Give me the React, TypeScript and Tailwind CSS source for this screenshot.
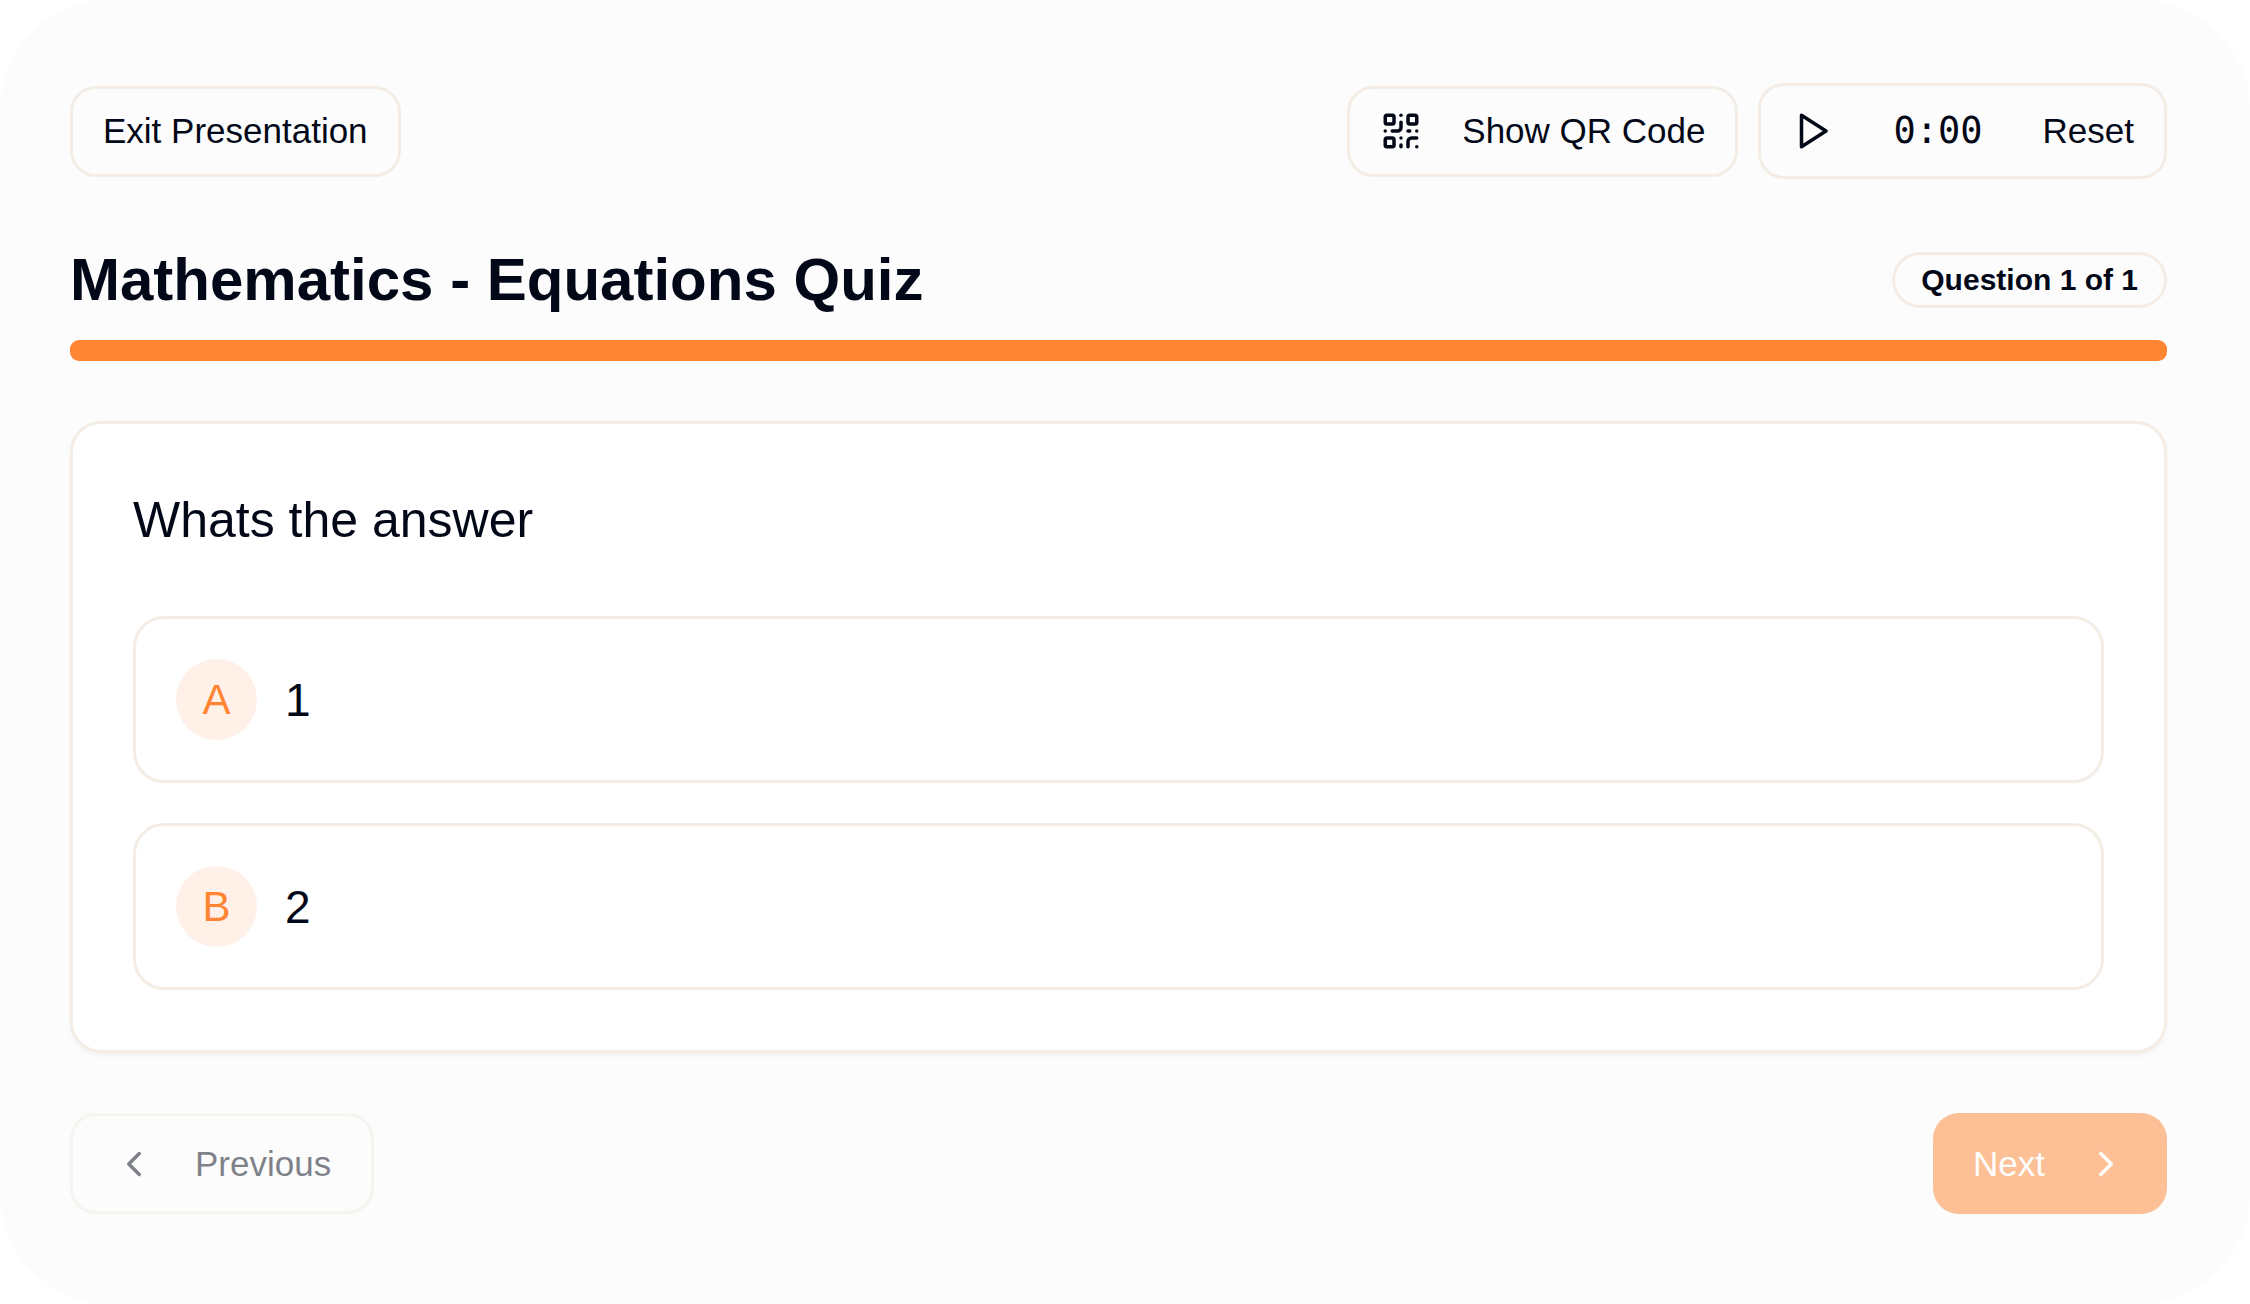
import { useEffect, useState } from "react";
import { ChevronLeft, ChevronRight, QrCode } from "lucide-react";

const quiz = {
  title: "Mathematics - Equations Quiz",
  questions: [{ text: "Whats the answer", options: ["1", "2"] }],
};

export default function App() {
  const [current, setCurrent] = useState(0);
  const [seconds, setSeconds] = useState(0);
  const [running, setRunning] = useState(false);

  // Count up while the timer is running
  useEffect(() => {
    if (!running) return;
    const timer = setInterval(() => setSeconds((s) => s + 1), 1000);
    return () => clearInterval(timer);
  }, [running]);

  const resetTimer = () => {
    setRunning(false);
    setSeconds(0);
  };

  const total = quiz.questions.length;
  const question = quiz.questions[current];
  const time = `${Math.floor(seconds / 60)}:${String(seconds % 60).padStart(2, "0")}`;

  return (
    <div className="min-h-screen bg-white font-['Liberation_Sans',Arial,sans-serif] text-[35px] leading-[52px] text-[#020817]">
      <main className="min-h-screen rounded-[110px] bg-[#fcfcfc] pt-[83px] pr-[83px] pb-[88px] pl-[70px]">
        {/* Toolbar */}
        <div className="flex items-center justify-between">
          <button className="flex h-[91px] items-center rounded-[26px] border-3 border-[#f4ede6] px-[30px]">
            Exit Presentation
          </button>
          <div className="flex items-center gap-5">
            <button className="flex h-[91px] items-center gap-10 rounded-[26px] border-3 border-[#f4ede6] px-[30px]">
              <QrCode className="size-[42px]" />
              Show QR Code
            </button>
            <div className="flex h-[96px] items-center rounded-[26px] border-3 border-[#f4ede6]">
              <button
                aria-label={running ? "Pause timer" : "Start timer"}
                onClick={() => setRunning(!running)}
                className="px-[30px]"
              >
                <svg
                  viewBox="0 0 24 24"
                  fill="none"
                  stroke="currentColor"
                  strokeWidth={2}
                  strokeLinecap="round"
                  strokeLinejoin="round"
                  className="size-[42px]"
                >
                  <polygon points="6 3 20 12 6 21 6 3" />
                </svg>
              </button>
              <span className="px-[30px] font-['DejaVu_Sans_Mono',monospace] text-[37px]">
                {time}
              </span>
              <button onClick={resetTimer} className="px-[30px]">
                Reset
              </button>
            </div>
          </div>
        </div>

        {/* Title and progress */}
        <div className="mt-[69px] flex items-center justify-between">
          <h1 className="text-[60px] leading-[64px] font-bold">{quiz.title}</h1>
          <span className="rounded-full border-3 border-[#f4ede6] px-[26px] py-1 text-[30px] leading-[42px] font-bold">
            Question {current + 1} of {total}
          </span>
        </div>
        <div className="mt-7 h-[21px] overflow-hidden rounded-[9px] bg-[#fff0e8]">
          <div
            className="h-full bg-[#ff8533]"
            style={{ width: `${((current + 1) / total) * 100}%` }}
          />
        </div>

        {/* Question card */}
        <section className="mt-[60px] rounded-[31px] border-3 border-[#f4ede6] bg-white p-[60px] shadow-[0_3px_5px_rgba(0,0,0,0.04)]">
          <h2 className="text-[50px] leading-[72px]">{question.text}</h2>
          <ul className="mt-[60px] flex flex-col gap-10">
            {question.options.map((option, index) => (
              <li
                key={option}
                className="flex items-center gap-7 rounded-[31px] border-3 border-[#f4ede6] p-10"
              >
                <span className="flex size-[81px] items-center justify-center rounded-full bg-[#fff0e8] text-[42px] text-[#ff8533]">
                  {String.fromCharCode(65 + index)}
                </span>
                <span className="text-[46px]">{option}</span>
              </li>
            ))}
          </ul>
        </section>

        {/* Navigation */}
        <div className="mt-[60px] flex items-center justify-between">
          <button
            disabled={current === 0}
            onClick={() => setCurrent(current - 1)}
            className="flex h-[101px] items-center gap-10 rounded-[26px] border-3 border-[#f4ede6] px-10 disabled:opacity-50"
          >
            <ChevronLeft className="size-[42px]" />
            Previous
          </button>
          <button
            disabled={current === total - 1}
            onClick={() => setCurrent(current + 1)}
            className="flex h-[101px] items-center gap-10 rounded-[26px] bg-[#ff8533] px-10 text-white disabled:opacity-50"
          >
            Next
            <ChevronRight className="size-[42px]" />
          </button>
        </div>
      </main>
    </div>
  );
}
